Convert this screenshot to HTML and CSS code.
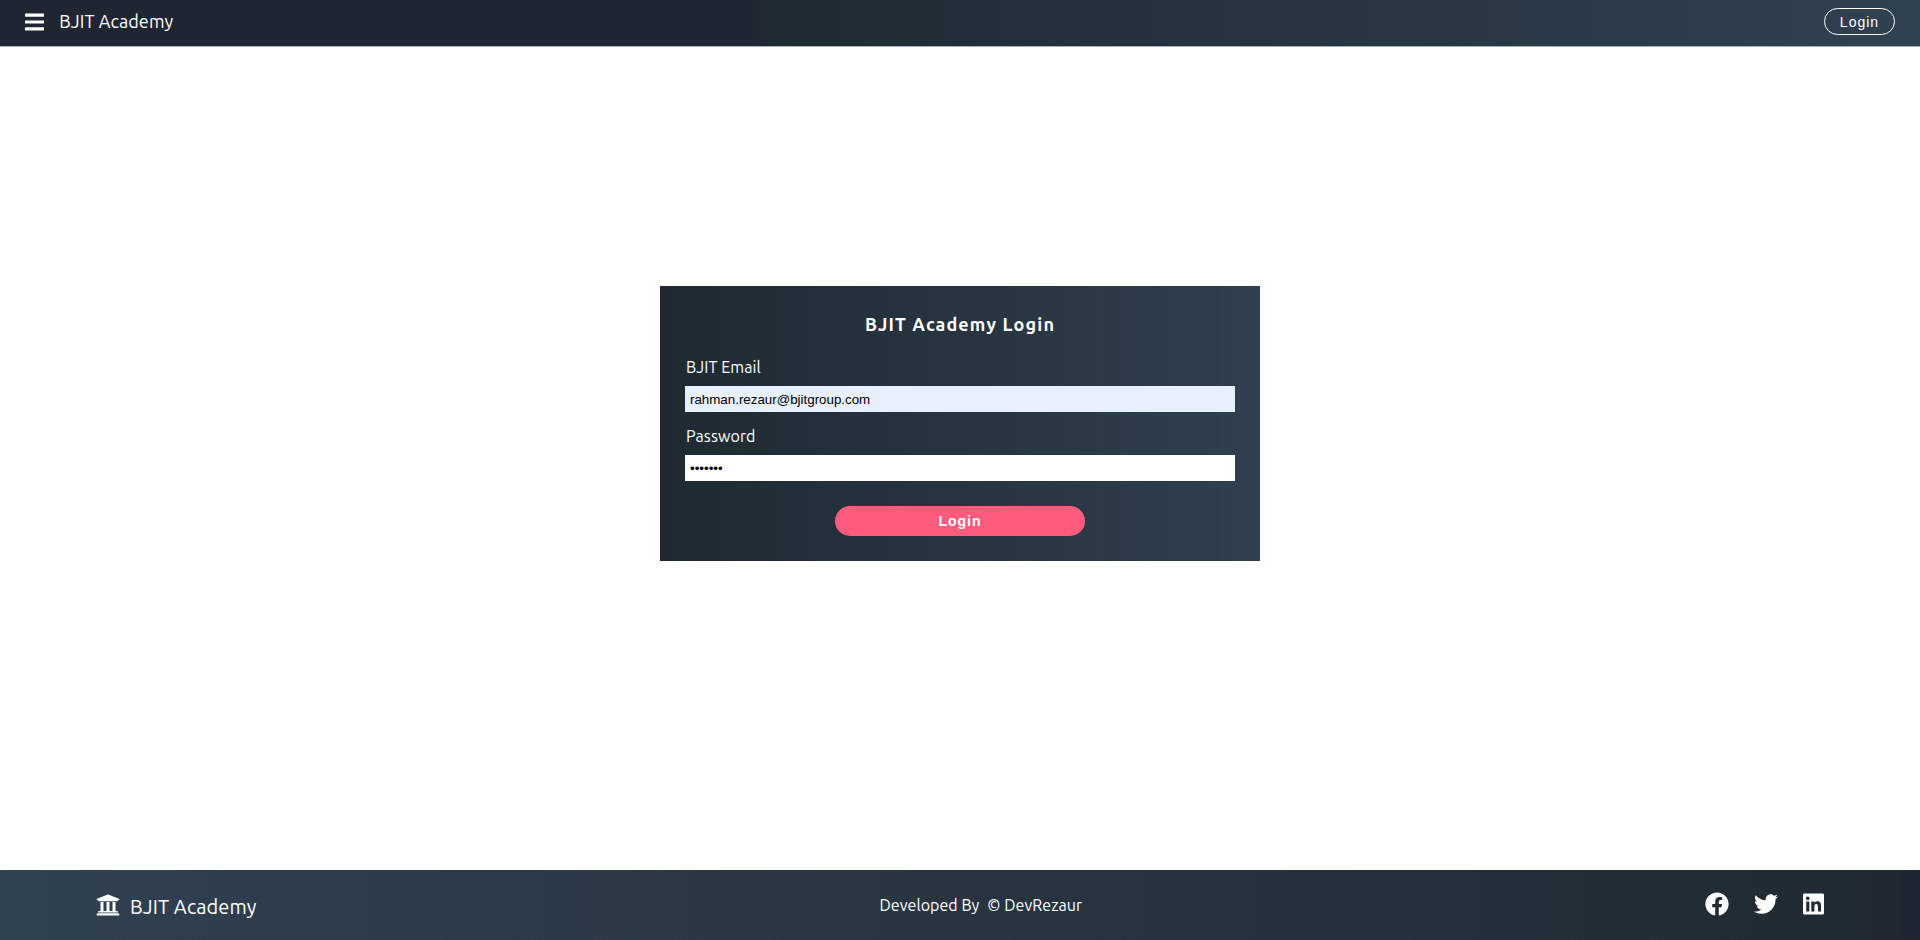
FILE: index.html
```html
<!DOCTYPE html>
<html lang="en">
<head>
<meta charset="utf-8">
<title>BJIT Academy</title>
<link rel="stylesheet" href="styles.css">
</head>
<body>
<header class="navbar">
  <svg class="menu-icon" viewBox="0 0 448 512" fill="currentColor"><path d="M16 132h416c8.837 0 16-7.163 16-16V76c0-8.837-7.163-16-16-16H16C7.163 60 0 67.163 0 76v40c0 8.837 7.163 16 16 16zm0 160h416c8.837 0 16-7.163 16-16v-40c0-8.837-7.163-16-16-16H16c-8.837 0-16 7.163-16 16v40c0 8.837 7.163 16 16 16zm0 160h416c8.837 0 16-7.163 16-16v-40c0-8.837-7.163-16-16-16H16c-8.837 0-16 7.163-16 16v40c0 8.837 7.163 16 16 16z"/></svg>
  <span class="brand">BJIT Academy</span>
  <button class="nav-login">Login</button>
</header>
<main class="content">
  <form class="card">
    <h1 class="card-title">BJIT Academy Login</h1>
    <label class="label label-email" for="email">BJIT Email</label>
    <input class="field field-filled" id="email" type="text" value="rahman.rezaur@bjitgroup.com">
    <label class="label label-password" for="password">Password</label>
    <input class="field" id="password" type="password" value="1234567">
    <button class="submit" type="button">Login</button>
  </form>
</main>
<footer class="footer">
  <div class="footer-brand">
    <svg class="icon" viewBox="0 0 512 512" fill="currentColor"><path d="M496 128v16a8 8 0 0 1-8 8h-24v12c0 6.627-5.373 12-12 12H60c-6.627 0-12-5.373-12-12v-12H24a8 8 0 0 1-8-8v-16a8 8 0 0 1 4.941-7.392l232-88a7.996 7.996 0 0 1 6.118 0l232 88A8 8 0 0 1 496 128zm-24 304H40c-13.255 0-24 10.745-24 24v16a8 8 0 0 0 8 8h464a8 8 0 0 0 8-8v-16c0-13.255-10.745-24-24-24zM96 192v192H60c-6.627 0-12 5.373-12 12v20h416v-20c0-6.627-5.373-12-12-12h-36V192h-64v192h-64V192h-64v192h-64V192H96z"/></svg>
    <span class="footer-name">BJIT Academy</span>
  </div>
  <div class="credit"><span class="credit-by">Developed By</span><span class="credit-name">© DevRezaur</span></div>
  <div class="social">
    <svg class="icon" viewBox="0 0 512 512" fill="currentColor"><path d="M504 256C504 119 393 8 256 8S8 119 8 256c0 123.78 90.69 226.38 209.25 245V327.69h-63V256h63v-54.64c0-62.15 37-96.48 93.67-96.48 27.14 0 55.52 4.84 55.52 4.84v61h-31.28c-30.8 0-40.41 19.12-40.41 38.73V256h68.78l-11 71.69h-57.78V501C413.31 482.38 504 379.78 504 256z"/></svg>
    <svg class="icon" viewBox="0 0 512 512" fill="currentColor"><path d="M459.37 151.716c.325 4.548.325 9.097.325 13.645 0 138.72-105.583 298.558-298.558 298.558-59.452 0-114.68-17.219-161.137-47.106 8.447.974 16.568 1.299 25.34 1.299 49.055 0 94.213-16.568 130.274-44.832-46.132-.975-84.792-31.188-98.112-72.772 6.498.974 12.995 1.624 19.818 1.624 9.421 0 18.843-1.3 27.614-3.573-48.081-9.747-84.143-51.98-84.143-102.985v-1.299c13.969 7.797 30.214 12.67 47.431 13.319-28.264-18.843-46.781-51.005-46.781-87.391 0-19.492 5.197-37.36 14.294-52.954 51.655 63.675 129.3 105.258 216.365 109.807-1.624-7.797-2.599-15.918-2.599-24.04 0-57.828 46.782-104.934 104.934-104.934 30.213 0 57.502 12.67 76.67 33.137 23.715-4.548 46.456-13.32 66.599-25.34-7.798 24.366-24.366 44.833-46.132 57.827 21.117-2.273 41.584-8.122 60.426-16.243-14.292 20.791-32.161 39.308-52.628 54.253z"/></svg>
    <svg class="icon icon-linkedin" viewBox="0 0 448 512" fill="currentColor"><path d="M416 32H31.9C14.3 32 0 46.5 0 64.3v383.4C0 465.5 14.3 480 31.9 480H416c17.6 0 32-14.5 32-32.3V64.3c0-17.8-14.4-32.3-32-32.3zM135.4 416H69V202.2h66.5V416zm-33.2-243c-21.3 0-38.5-17.3-38.5-38.5S80.9 96 102.2 96c21.2 0 38.5 17.3 38.5 38.5 0 21.3-17.2 38.5-38.5 38.5zm282.1 243h-66.4V312c0-24.8-.5-56.7-34.5-56.7-34.6 0-39.9 27-39.9 54.9V416h-66.4V202.2h63.7v29.2h.9c8.9-16.8 30.6-34.5 62.9-34.5 67.2 0 79.7 44.3 79.7 101.9V416z"/></svg>
  </div>
</footer>
</body>
</html>
```
FILE: styles.css
```css
* { box-sizing: border-box; }
body {
  margin: 0;
  height: 940px;
  display: flex;
  flex-direction: column;
  background: #fff;
  color: #fff;
  font-family: Ubuntu, "Noto Sans", sans-serif;
}
.navbar {
  height: 47px;
  flex: none;
  display: flex;
  align-items: center;
  padding: 0 25px 3px;
  border-bottom: 1px solid #a3adb8;
  background: linear-gradient(to right, #202631 0%, #202631 39%, #202a32 40%, #304152 100%);
}
.menu-icon { width: 19.25px; height: 22px; }
.brand {
  margin: 0 0 2px 15px;
  font-size: 18px;
  line-height: 24px;
  letter-spacing: 0.09px;
}
.nav-login {
  width: 71px;
  height: 27px;
  margin-left: auto;
  padding: 1px 0 0 0;
  border: 1px solid #fff;
  border-radius: 14px;
  background: transparent;
  color: #fff;
  font: 14px/24px "Liberation Sans", Arial, sans-serif;
  letter-spacing: 1px;
}
.content {
  flex: 1;
  display: flex;
  justify-content: center;
  align-items: flex-start;
  padding-top: 239px;
}
.card {
  width: 600px;
  height: 275px;
  padding: 25px;
  display: flex;
  flex-direction: column;
  background: linear-gradient(to right, #202631 0%, #202a32 3%, #283541 55%, #304050 100%);
}
.card-title {
  margin: 0;
  font-size: 18px;
  line-height: 26px;
  font-weight: 700;
  letter-spacing: 1.12px;
  text-align: center;
}
.label {
  padding-left: 1px;
  font-size: 16px;
  line-height: 20px;
  letter-spacing: 0.1px;
}
.label-email { margin: 20px 0 4px; }
.label-password { margin: 14px 0 9px; }
.label-email + .field { margin-top: 5px; }
.field {
  height: 26px;
  padding: 0 5px;
  border: 0;
  border-radius: 0;
  background: #fff;
  color: #000;
  font: 13.333px "Liberation Sans", Arial, sans-serif;
}
.field-filled { background: #e8f0fe; }
.submit {
  width: 250px;
  height: 30px;
  margin-top: 25px;
  padding: 1px 0 0 0;
  align-self: center;
  border: 0;
  border-radius: 15px;
  background: #ff5c7d;
  color: #fff;
  font: 700 14px/29px "Liberation Sans", Arial, sans-serif;
  letter-spacing: 1px;
}
.footer {
  height: 70px;
  flex: none;
  display: flex;
  justify-content: space-between;
  align-items: center;
  padding: 0 96px;
  background: linear-gradient(to right, #304152 0%, #283541 50%, #202a32 97%, #202631 100%);
}
.footer-brand { display: flex; align-items: center; }
.footer-name {
  margin: 3px 0 0 10px;
  font-size: 20px;
  line-height: 26px;
  letter-spacing: 0.09px;
}
.icon { width: 24px; height: 24px; flex: none; }
.icon-linkedin { width: 21px; }
.credit {
  display: flex;
  gap: 8px;
  font-size: 16px;
  line-height: 22px;
  letter-spacing: 0.04px;
}
.social {
  display: flex;
  gap: 25px;
  padding-bottom: 2px;
}
```
